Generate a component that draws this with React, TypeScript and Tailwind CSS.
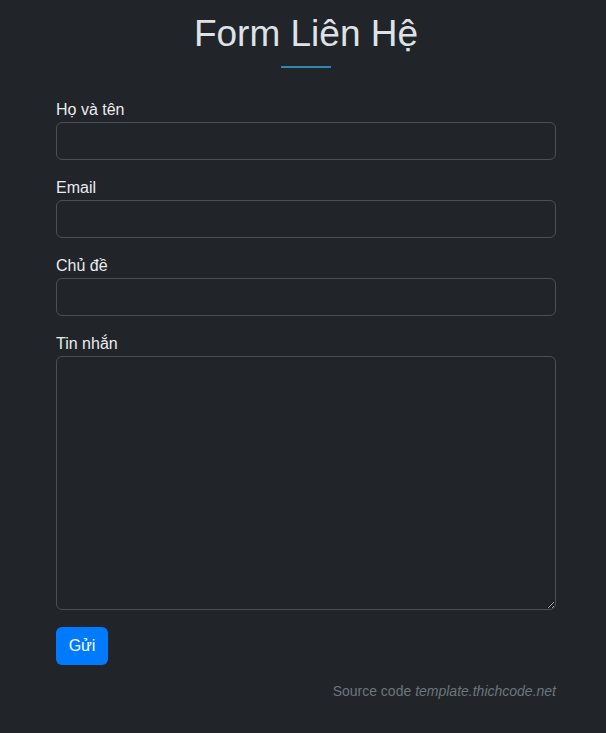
import React from 'react';

const FIELDS = [
  { key: 'name', label: 'Họ và tên', type: 'text' },
  { key: 'email', label: 'Email', type: 'email' },
  { key: 'subject', label: 'Chủ đề', type: 'text' },
] as const;

export default function App() {
  return (
    <div
      className="min-h-[733px] bg-[#212529] pt-[12px] text-[#dee2e6]"
      style={{ fontFamily: '"Liberation Sans", Arial, sans-serif' }}
    >
      <div className="ml-[56px] w-[500px]">
        {/* Title */}
        <h1 className="text-center text-[37px] leading-[44px] font-normal text-[#dee2e6]">
          Form Liên Hệ
        </h1>
        <div className="mx-auto mt-[10px] h-[2px] w-[50px] bg-[#2a89ac]" />

        {/* Form */}
        <form className="mt-[28px]" onSubmit={(e) => e.preventDefault()}>
          {FIELDS.map((f) => (
            <div key={f.key} className="mb-[14px]">
              <label className="block pt-[2px] text-base leading-6 text-[#e9ecef]">
                {f.label}
              </label>
              <input
                type={f.type}
                className="block h-[38px] w-full rounded-md border border-[#495057] bg-transparent px-3 text-base text-[#dee2e6] outline-none"
              />
            </div>
          ))}

          <div className="mb-[17px]">
            <label className="block pt-[2px] text-base leading-6 text-[#e9ecef]">
              Tin nhắn
            </label>
            <textarea className="block h-[254px] w-full resize-y rounded-md border border-[#495057] bg-transparent px-3 py-1.5 text-base text-[#dee2e6] outline-none [color-scheme:dark]" />
          </div>

          <button
            type="submit"
            className="h-[38px] w-[52px] rounded-md bg-[#007bff] text-base text-white"
          >
            Gửi
          </button>
        </form>

        {/* Footer */}
        <p className="mt-[16px] text-right text-sm leading-[21px] text-[#6c757d]">
          Source code <i>template.thichcode.net</i>
        </p>
      </div>
    </div>
  );
}
